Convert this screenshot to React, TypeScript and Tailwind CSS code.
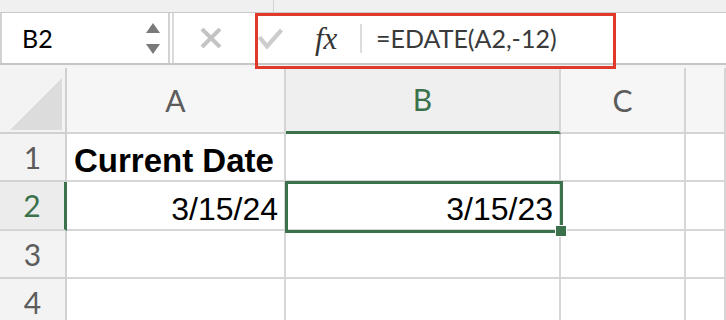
const ui = { fontFamily: 'Lato, "Open Sans", sans-serif' };
const cellFont = { fontFamily: '"Liberation Sans", Arial, sans-serif' };

function XIcon() {
  return (
    <svg width="22" height="20" viewBox="0 0 22 20">
      <path d="M2 1 L20 19 M20 1 L2 19" stroke="#c4c4c4" strokeWidth="4" fill="none" />
    </svg>
  );
}

function CheckIcon() {
  return (
    <svg width="25" height="21" viewBox="0 0 25 21">
      <path d="M1.5 9 L9 18.5 L23.5 2" stroke="#cdcdcd" strokeWidth="4.2" fill="none" />
    </svg>
  );
}

function Spinner() {
  return (
    <div className="flex flex-col gap-[11px]">
      <svg width="14" height="10" viewBox="0 0 14 10">
        <path d="M7 0 L14 10 L0 10 Z" fill="#7a7a7a" />
      </svg>
      <svg width="14" height="10" viewBox="0 0 14 10">
        <path d="M0 0 L14 0 L7 10 Z" fill="#7a7a7a" />
      </svg>
    </div>
  );
}

const cols = ['A', 'B', 'C', ''];

export default function App() {
  return (
    <div className="relative w-[726px] h-[320px] overflow-hidden bg-white" style={ui}>
      {/* top strip */}
      <div className="h-[13px] bg-[#f0f0f0] border-b border-[#c9c9c9] flex">
        <div className="ml-[273px] w-px h-full bg-[#d4d4d4]" />
      </div>

      {/* formula bar */}
      <div className="flex h-[50px] items-center bg-white">
        <div className="flex items-center justify-between w-[170px] h-full border-x-2 border-[#d2d2d2] pl-[20px] pr-[8px]">
          <span className="text-[25px] text-black leading-none">B2</span>
          <Spinner />
        </div>
        <div className="ml-[2px] w-[2px] h-full bg-[#dadada]" />
        <div className="ml-[26px]"><XIcon /></div>
        <div className="ml-[36px]"><CheckIcon /></div>
        <span
          className="ml-[32px] w-[28px] text-[31px] italic leading-none text-[#333]"
          style={{ fontFamily: '"Liberation Serif", "DejaVu Serif", serif' }}
        >
          fx
        </span>
        <div className="ml-[17px] w-[2px] h-[29px] bg-[#dcdcdc]" />
        <span className="ml-[14px] text-[25px] leading-none text-[#3a3a3a]">=EDATE(A2,-12)</span>
      </div>
      <div className="h-[5px] bg-[#f4f4f4] border-t-2 border-[#c6c6c6]" />

      {/* grid */}
      <div className="relative grid grid-cols-[67px_219px_275px_125px_40px] grid-rows-[66px_48px_49px_48px_48px]">
        {/* header row */}
        <div className="flex items-end justify-end border-r-2 border-b-2 border-[#d0d0d0] bg-[#f3f3f3] pr-[3px] pb-[2px]">
          <svg width="52" height="52" viewBox="0 0 52 52">
            <path d="M52 0 L52 52 L0 52 Z" fill="#dcdcdc" />
          </svg>
        </div>
        {cols.map((c) => (
          <div
            key={c || 'd'}
            className={
              c === 'B'
                ? 'flex items-center justify-center border-r-2 border-b-[3px] border-r-[#d6d6d6] border-b-[#3b714b] bg-[#efefef] text-[30px] text-[#3b714b]'
                : 'flex items-center justify-center border-r-2 border-b-2 border-[#d4d4d4] bg-[#f6f6f6] text-[30px] text-[#5c5c5c]'
            }
          >
            {c}
          </div>
        ))}

        {[1, 2, 3, 4].map((r) => (
          <Row key={r} r={r} />
        ))}

        {/* selection */}
        <div className="absolute left-[285px] top-[113px] w-[278px] h-[52px] border-[3px] border-[#3b714b] pointer-events-none" />
        <div className="absolute left-[555px] top-[157px] w-[12px] h-[12px] bg-[#3b714b] border border-white" />
      </div>

      {/* annotation box */}
      <div className="absolute left-[255px] top-[13px] w-[361px] h-[56px] border-[3px] border-[#e0392b] pointer-events-none" />
    </div>
  );
}

function Row({ r }: { r: number }) {
  const sel = r === 2;
  const line = 'border-r-2 border-b-2 border-[#d6d6d6]';
  return (
    <>
      <div
        className={
          sel
            ? 'flex items-center justify-center border-b-2 border-b-[#d6d6d6] border-r-[3px] border-r-[#3b714b] bg-[#ececec] text-[30px] text-[#3b714b]'
            : 'flex items-center justify-center border-r-2 border-b-2 border-[#d2d2d2] bg-[#f3f3f3] text-[30px] text-[#5c5c5c]'
        }
      >
        {r}
      </div>
      <div className={`${line} flex items-end leading-none`} style={cellFont}>
        {r === 1 && <span className="pl-[7px] pb-[3px] text-[33px] font-bold text-black">Current Date</span>}
        {r === 2 && <span className="ml-auto pr-[6px] pb-[4px] text-[32px] text-black">3/15/24</span>}
      </div>
      <div className={`${line} flex items-end leading-none`} style={cellFont}>
        {r === 2 && <span className="ml-auto pr-[6px] pb-[4px] text-[32px] text-black">3/15/23</span>}
      </div>
      <div className={line} />
      <div className={line} />
    </>
  );
}
